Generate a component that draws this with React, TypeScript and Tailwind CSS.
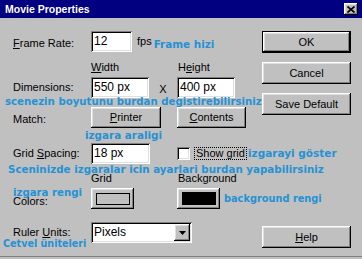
import React from 'react';

const btn =
  "flex shrink-0 items-center justify-center bg-[#c0c0c0] shadow-[inset_-1px_-1px_0_#000,inset_1px_1px_0_#fff,inset_-2px_-2px_0_#808080,inset_2px_2px_0_#dfdfdf]";
const field =
  "flex shrink-0 items-center bg-white text-[12px] pl-[3px] shadow-[inset_1px_1px_0_#808080,inset_-1px_-1px_0_#fff,inset_2px_2px_0_#000,inset_-2px_-2px_0_#dfdfdf]";
const note =
  "shrink-0 font-['DejaVu_Sans',Verdana,sans-serif] font-bold text-[#2592d4] whitespace-nowrap leading-none";
const label = "w-[91px] shrink-0 pl-[13px]";

export default function App() {
  return (
    <div className="w-[362px] h-[259px] bg-[#c0c0c0] overflow-hidden flex flex-col whitespace-nowrap font-['Liberation_Sans',Arial,sans-serif] text-[11px] text-black leading-[13px]">
      {/* title bar */}
      <div className="h-[18px] shrink-0 bg-[#000080] flex items-center justify-between pl-[5px] pr-[4px]">
        <span className="text-white font-bold text-[10.5px]">Movie Properties</span>
        <div className={btn + " w-[14px] h-[12px]"}>
          <svg width="8" height="7" viewBox="0 0 8 7">
            <path d="M0.5 0.5 L7.5 6.5 M7.5 0.5 L0.5 6.5" stroke="#000" strokeWidth="1.6" />
          </svg>
        </div>
      </div>

      <div className="flex flex-1">
        {/* left side */}
        <div className="w-[262px] shrink-0 flex flex-col pt-[13px]">
          <div className="h-[21px] flex items-center">
            <span className={label + " mt-[3px]"}><u>F</u>rame Rate:</span>
            <div className={field + " w-[41px] h-[21px]"}>12</div>
            <span className="shrink-0 ml-[5px]">fps</span>
            <span className={note + " text-[10.4px] ml-[2px] mt-[6px]"}>Frame hizi</span>
          </div>

          <div className="h-[25px] flex items-end pb-[3px] pl-[91px]">
            <span className="w-[87px] shrink-0"><u>W</u>idth</span>
            <span className="shrink-0">H<u>e</u>ight</span>
          </div>

          <div className="h-[21px] flex items-center">
            <span className={label}>Dimensions:</span>
            <div className={field + " w-[58px] h-[21px]"}>550 px</div>
            <span className="w-[28px] shrink-0 text-center mt-[3px]">X</span>
            <div className={field + " w-[58px] h-[21px]"}>400 px</div>
          </div>

          <div className="h-[9px] flex items-center pl-[5px]">
            <span className={note + " text-[10.2px]"}>scenezin boyutunu burdan degistirebilirsiniz</span>
          </div>

          <div className="h-[21px] flex items-center">
            <span className={label + " mt-[4px]"}>Match:</span>
            <div className={btn + " w-[70px] h-[21px]"}><span><u>P</u>rinter</span></div>
            <div className={btn + " w-[69px] h-[21px] ml-[16px]"}><span><u>C</u>ontents</span></div>
          </div>

          <div className="h-[15px] flex items-center pl-[85px]">
            <span className={note + " text-[10.4px]"}>izgara araligi</span>
          </div>

          <div className="h-[21px] flex items-center">
            <span className={label}>Grid <u>S</u>pacing:</span>
            <div className={field + " w-[59px] h-[21px]"}>18 px</div>
            <div className={field + " w-[13px] h-[13px] ml-[27px]"} />
            <span className="shrink-0 ml-[4px] h-[13px] px-[1px] border border-dotted border-black flex items-center">Show grid</span>
            <span className={note + " text-[10.5px] ml-[1px]"}>izgarayi göster</span>
          </div>

          <div className="h-[10px] flex items-center pl-[8px]">
            <span className={note + " text-[10.3px]"}>Sceninizde izgaralar icin ayarlari burdan yapabilirsiniz</span>
          </div>

          <div className="h-[14px] flex items-start pl-[91px]">
            <span className="w-[87px] shrink-0 -mt-[2px]">Grid</span>
            <span className="shrink-0 -mt-[2px]">Background</span>
          </div>

          <div className="h-[21px] flex items-center relative">
            <span className={note + " text-[10.2px] absolute left-[13px] top-0"}>izgara rengi</span>
            <span className={label + " mt-[5px]"}>Colors:</span>
            <div className={btn + " w-[43px] h-[21px]"}>
              <div className="w-[34px] h-[12px] border border-black bg-[#c0c0c0]" />
            </div>
            <div className={btn + " w-[43px] h-[21px] ml-[43px]"}>
              <div className="w-[34px] h-[13px] bg-black" />
            </div>
            <span className={note + " text-[9.8px] ml-[4px]"}>background rengi</span>
          </div>

          <div className="h-[21px] flex items-center mt-[13px]">
            <span className={label}>Ruler <u>U</u>nits:</span>
            <div className={field + " w-[101px] h-[21px] justify-between pr-[2px]"}>
              <span>Pixels</span>
              <div className={btn + " w-[16px] h-[17px]"}>
                <svg width="7" height="4" viewBox="0 0 7 4">
                  <path d="M0 0 H7 L3.5 4 Z" fill="#000" />
                </svg>
              </div>
            </div>
          </div>

          <div className="h-[10px] flex items-center pl-[3px] -mt-[4px]">
            <span className={note + " text-[9.6px]"}>Cetvel üniteleri</span>
          </div>
        </div>

        {/* right buttons */}
        <div className="w-[89px] shrink-0 flex flex-col pt-[13px] pb-[8px]">
          <div className={btn + " h-[22px] border border-black"}>OK</div>
          <div className={btn + " h-[22px] mt-[9px]"}>Cancel</div>
          <div className={btn + " h-[22px] mt-[9px]"}>Save Default</div>
          <div className={btn + " h-[22px] mt-auto"}><span><u>H</u>elp</span></div>
        </div>
      </div>

      <div className="h-[3px] shrink-0 border-t border-[#808080]" />
    </div>
  );
}
